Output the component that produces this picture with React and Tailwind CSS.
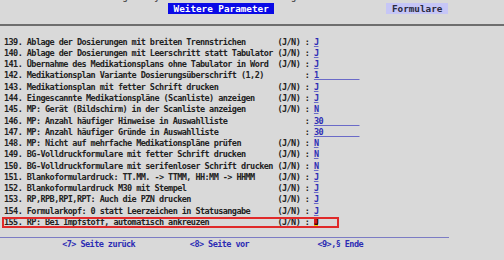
import React from "react";

const rows = [
  ["139", "Ablage der Dosierungen mit breiten Trennstrichen", true, "J", 1],
  ["140", "Ablage der Dosierungen mit Leerschritt statt Tabulator", true, "J", 1],
  ["141", "Übernahme des Medikationsplans ohne Tabulator in Word", true, "J", 1],
  ["142", "Medikationsplan Variante Dosierungsüberschrift (1,2)", false, "1", 10],
  ["143", "Medikationsplan mit fetter Schrift drucken", true, "J", 1],
  ["144", "Eingescannte Medikationspläne (Scanliste) anzeigen", true, "J", 1],
  ["145", "MP: Gerät (Bildschirm) in der Scanliste anzeigen", true, "N", 1],
  ["146", "MP: Anzahl häufiger Hinweise in Auswahlliste", false, "30", 10],
  ["147", "MP: Anzahl häufiger Gründe in Auswahlliste", false, "30", 10],
  ["148", "MP: Nicht auf mehrfache Medikationspläne prüfen", true, "N", 1],
  ["149", "BG-Volldruckformulare mit fetter Schrift drucken", true, "N", 1],
  ["150", "BG-Volldruckformulare mit serifenloser Schrift drucken", true, "N", 1],
  ["151", "Blankoformulardruck: TT.MM. -> TTMM, HH:MM -> HHMM", true, "J", 1],
  ["152", "Blankoformulardruck M30 mit Stempel", true, "J", 1],
  ["153", "RP,RPB,RPI,RPT: Auch die PZN drucken", true, "J", 1],
  ["154", "Formularkopf: 0 statt Leerzeichen in Statusangabe", true, "J", 1],
  ["155", "RP: Bei Impfstoff, automatisch ankreuzen", true, "J", 1],
];

export default function App() {
  const sp = (n) => " ".repeat(n);
  return (
    <div className="w-[504px] h-[260px] overflow-hidden bg-[#d9d9d9] font-['DejaVu_Sans_Mono','Liberation_Mono',monospace] text-[#222222]">
      {/* header */}
      <div className="h-[24px] overflow-hidden">
        <div className="-mt-[8px] h-[10px] leading-[10px] text-[8.5px] tracking-[-0.56px] font-bold whitespace-pre pl-[4px] text-[#555555]">
          {sp(16) + "K o n f i g .  S y s t e m e i n s t e l l u n g e n   T e i l"}
        </div>
        <div className="mt-[1px] flex h-[11px] leading-[11px] text-[9.3px] font-bold whitespace-pre">
          <span className="ml-[168px] bg-[#0a0ae6] text-white">{" Weitere Parameter "}</span>
          <span className="ml-[112px] bg-[#c6c6f6] text-[#2a2a40]">{" Formulare "}</span>
        </div>
      </div>
      <div className="h-[2px] bg-[#6e6e6e]" />
      {/* body */}
      <div className="pt-[10.7px] text-[8.5px] tracking-[-0.56px] font-bold">
        {rows.map(([num, label, jn, val, len], i) => {
          const left = `${num}. ${label}`.padEnd(60) + (jn ? "(J/N)" : "     ") + " : ";
          const active = i === rows.length - 1;
          return (
            <div key={num} className="relative h-[11.27px] leading-[11.27px] whitespace-pre pl-[4px]">
              {left}
              {active ? (
                <span className="bg-[#d41c1c] text-[#2a0a0a] shadow-[inset_0_-2px_0_#f2d200]">{val}</span>
              ) : (
                <span className="text-[#2e2eb4] underline decoration-[#6a6ac8] underline-offset-[1px]">
                  {val.padEnd(len)}
                </span>
              )}
              {active && (
                <div className="absolute left-[2px] top-0 w-[337px] h-full border-2 border-[#e02a2a]" />
              )}
            </div>
          );
        })}
        <div className="mt-[9px] h-px w-[449px] bg-[#7c7cc4]" />
        <div className="mt-[1px] h-[11.27px] leading-[11.27px] whitespace-pre pl-[3px] text-[#2c2cb4]">
          {sp(13) + "<7> Seite zurück" + sp(12) + "<8> Seite vor" + sp(15) + "<9>,§ Ende"}
        </div>
      </div>
    </div>
  );
}
